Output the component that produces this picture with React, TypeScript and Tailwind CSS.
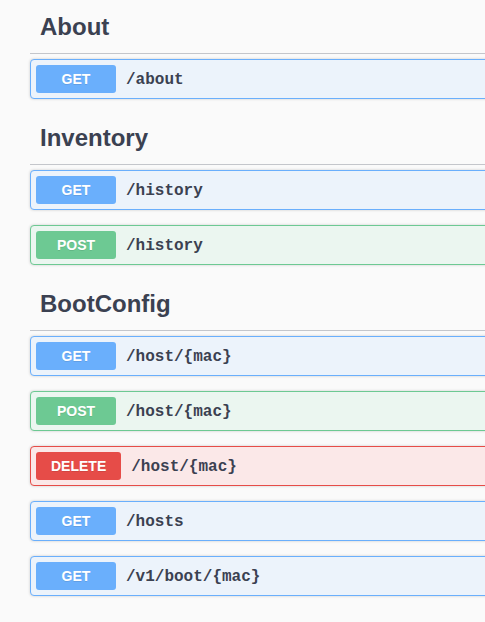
const sections = [
  { tag: 'About', ops: [{ method: 'GET', path: '/about' }] },
  {
    tag: 'Inventory',
    ops: [
      { method: 'GET', path: '/history' },
      { method: 'POST', path: '/history' },
    ],
  },
  {
    tag: 'BootConfig',
    ops: [
      { method: 'GET', path: '/host/{mac}' },
      { method: 'POST', path: '/host/{mac}' },
      { method: 'DELETE', path: '/host/{mac}' },
      { method: 'GET', path: '/hosts' },
      { method: 'GET', path: '/v1/boot/{mac}' },
    ],
  },
];

const styles: Record<string, { block: string; badge: string }> = {
  GET: { block: 'border-[#6aaffc] bg-[#ecf3fb]', badge: 'bg-[#6aaffc]' },
  POST: { block: 'border-[#6dc993] bg-[#ebf6f0]', badge: 'bg-[#6dc993]' },
  DELETE: { block: 'border-[#e64c48] bg-[#fbe8e8]', badge: 'bg-[#e64c48]' },
};

function Operation({ method, path }: { method: string; path: string }) {
  const s = styles[method];
  return (
    <div
      className={`mb-[15px] flex h-[40px] items-center rounded-[4px] border px-[5px] shadow-[0_0_3px_rgba(0,0,0,0.19)] ${s.block}`}
    >
      <span
        className={`flex h-[28px] min-w-[80px] items-center justify-center rounded-[3px] px-[15px] text-[14px] font-bold text-white [text-shadow:0_1px_0_rgba(0,0,0,0.1)] ${s.badge}`}
      >
        {method}
      </span>
      <span className="ml-[10px] pt-[1px] font-['Liberation_Mono',monospace] text-[16px] font-bold text-[#3b4151]">
        {path}
      </span>
    </div>
  );
}

export default function App() {
  return (
    <div className="h-[622px] w-[485px] overflow-hidden bg-[#fafafa] font-['Liberation_Sans',Arial,sans-serif]">
      <div className="w-[640px] pl-[30px] pt-[3px]">
        {sections.map((section) => (
          <div key={section.tag}>
            <h4 className="mb-[5px] border-b border-[#c4c6cb] pb-[11px] pl-[10px] pt-[9px] text-[24px] font-bold leading-[30px] text-[#3b4151]">
              {section.tag}
            </h4>
            {section.ops.map((op) => (
              <Operation key={op.method + op.path} method={op.method} path={op.path} />
            ))}
          </div>
        ))}
      </div>
    </div>
  );
}
